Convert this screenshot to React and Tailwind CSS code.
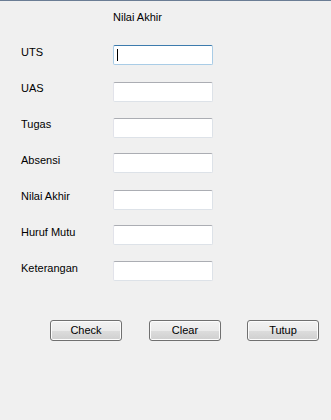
export default function App() {
  const rows = [
    ["UTS", "mt-0"],
    ["UAS", "mt-[17px]"],
    ["Tugas", "mt-[16px]"],
    ["Absensi", "mt-[15px]"],
    ["Nilai Akhir", "mt-[17px]"],
    ["Huruf Mutu", "mt-[15px]"],
    ["Keterangan", "mt-[16px]"],
  ];
  const lp = ["pt-[1px]", "pt-0", "pt-0", "pt-[1px]", "pt-0", "pt-[1px]", "pt-[1px]"];
  return (
    <div className="w-[331px] h-[420px] bg-[#f0f0f0] border-t border-[#6b7d95] font-['Liberation_Sans',Arial,sans-serif] text-[11px] leading-[13px] text-black pt-[10px]">
      <div className="pl-[113px]">Nilai Akhir</div>
      <div className="mt-[21px] flex flex-col pl-[21px]">
        {rows.map(([r, m], i) => (
          <div key={r} className={`flex items-start ${m}`}>
            <div className={`w-[92px] ${lp[i]}`}>{r}</div>
            {i === 0 ? (
              <div className="w-[100px] h-[20px] bg-white border border-[#a9cce6] border-t-[#3d7bad] rounded-[2px] pl-[2px] pt-[2px]">
                <div className="w-[1px] h-[12px] bg-black ml-[1px] mt-[1px]"></div>
              </div>
            ) : (
              <div className="w-[100px] h-[20px] bg-white border border-[#dde2e8] border-t-[#abadb3] border-l-[#e2e3ea] rounded-[2px]"></div>
            )}
          </div>
        ))}
      </div>
      <div className="mt-[39px] flex pl-[50px]">
        {["Check", "Clear", "Tutup"].map((b, i) => (
          <div
            key={b}
            className={`w-[72px] h-[21px] rounded-[3px] border border-[#707070] bg-[linear-gradient(to_bottom,#f2f2f2_0%,#ebebeb_50%,#dddddd_50%,#cfcfcf_100%)] shadow-[inset_0_0_0_1px_#fcfcfc] flex items-center justify-center ${i === 1 ? "ml-[27px]" : i === 2 ? "ml-[26px]" : ""}`}
          >
            {b}
          </div>
        ))}
      </div>
    </div>
  );
}
